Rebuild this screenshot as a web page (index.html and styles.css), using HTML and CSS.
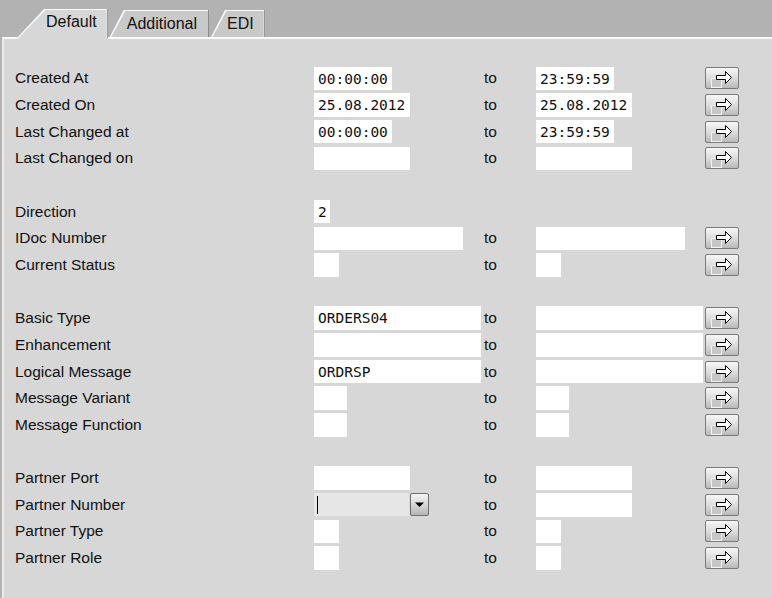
FILE: index.html
```html
<!DOCTYPE html>
<html lang="en">
<head>
  <meta charset="UTF-8">
  <title>IDoc Selection</title>
  <link rel="stylesheet" href="styles.css">
</head>
<body>
  <!-- Tab strip -->
  <div class="tabs">
    <div class="tab tab-active"><span>Default</span></div>
    <div class="tab tab-additional"><span>Additional</span></div>
    <div class="tab tab-edi"><span>EDI</span></div>
  </div>

  <div class="panel">
    <div class="form-grid">
      <!-- Dates and times -->
      <div class="label">Created At</div>
      <div class="field w-time">00:00:00</div>
      <div class="to">to</div>
      <div class="field w-time">23:59:59</div>
      <button class="sel-btn"><svg viewBox="0 0 32 20"><rect x="5.5" y="10.5" width="10" height="9" fill="#c6c6c6" stroke="#f2f2f2"/><path d="M10.5 7.5H19.5V3.5L25.5 9.5L19.5 15.5V11.5H10.5Z" fill="#fff" stroke="#000"/></svg></button>

      <div class="label">Created On</div>
      <div class="field w-date">25.08.2012</div>
      <div class="to">to</div>
      <div class="field w-date">25.08.2012</div>
      <button class="sel-btn"><svg viewBox="0 0 32 20"><rect x="5.5" y="10.5" width="10" height="9" fill="#c6c6c6" stroke="#f2f2f2"/><path d="M10.5 7.5H19.5V3.5L25.5 9.5L19.5 15.5V11.5H10.5Z" fill="#fff" stroke="#000"/></svg></button>

      <div class="label">Last Changed at</div>
      <div class="field w-time">00:00:00</div>
      <div class="to">to</div>
      <div class="field w-time">23:59:59</div>
      <button class="sel-btn"><svg viewBox="0 0 32 20"><rect x="5.5" y="10.5" width="10" height="9" fill="#c6c6c6" stroke="#f2f2f2"/><path d="M10.5 7.5H19.5V3.5L25.5 9.5L19.5 15.5V11.5H10.5Z" fill="#fff" stroke="#000"/></svg></button>

      <div class="label">Last Changed on</div>
      <div class="field w-date"></div>
      <div class="to">to</div>
      <div class="field w-date"></div>
      <button class="sel-btn"><svg viewBox="0 0 32 20"><rect x="5.5" y="10.5" width="10" height="9" fill="#c6c6c6" stroke="#f2f2f2"/><path d="M10.5 7.5H19.5V3.5L25.5 9.5L19.5 15.5V11.5H10.5Z" fill="#fff" stroke="#000"/></svg></button>

      <div class="gap-row"></div>

      <!-- IDoc -->
      <div class="label">Direction</div>
      <div class="field w-1">2</div>

      <div class="label">IDoc Number</div>
      <div class="field w-idoc"></div>
      <div class="to">to</div>
      <div class="field w-idoc"></div>
      <button class="sel-btn"><svg viewBox="0 0 32 20"><rect x="5.5" y="10.5" width="10" height="9" fill="#c6c6c6" stroke="#f2f2f2"/><path d="M10.5 7.5H19.5V3.5L25.5 9.5L19.5 15.5V11.5H10.5Z" fill="#fff" stroke="#000"/></svg></button>

      <div class="label">Current Status</div>
      <div class="field w-2"></div>
      <div class="to">to</div>
      <div class="field w-2"></div>
      <button class="sel-btn"><svg viewBox="0 0 32 20"><rect x="5.5" y="10.5" width="10" height="9" fill="#c6c6c6" stroke="#f2f2f2"/><path d="M10.5 7.5H19.5V3.5L25.5 9.5L19.5 15.5V11.5H10.5Z" fill="#fff" stroke="#000"/></svg></button>

      <div class="gap-row"></div>

      <!-- Message -->
      <div class="label">Basic Type</div>
      <div class="field w-long">ORDERS04</div>
      <div class="to">to</div>
      <div class="field w-long"></div>
      <button class="sel-btn"><svg viewBox="0 0 32 20"><rect x="5.5" y="10.5" width="10" height="9" fill="#c6c6c6" stroke="#f2f2f2"/><path d="M10.5 7.5H19.5V3.5L25.5 9.5L19.5 15.5V11.5H10.5Z" fill="#fff" stroke="#000"/></svg></button>

      <div class="label">Enhancement</div>
      <div class="field w-long"></div>
      <div class="to">to</div>
      <div class="field w-long"></div>
      <button class="sel-btn"><svg viewBox="0 0 32 20"><rect x="5.5" y="10.5" width="10" height="9" fill="#c6c6c6" stroke="#f2f2f2"/><path d="M10.5 7.5H19.5V3.5L25.5 9.5L19.5 15.5V11.5H10.5Z" fill="#fff" stroke="#000"/></svg></button>

      <div class="label">Logical Message</div>
      <div class="field w-long">ORDRSP</div>
      <div class="to">to</div>
      <div class="field w-long"></div>
      <button class="sel-btn"><svg viewBox="0 0 32 20"><rect x="5.5" y="10.5" width="10" height="9" fill="#c6c6c6" stroke="#f2f2f2"/><path d="M10.5 7.5H19.5V3.5L25.5 9.5L19.5 15.5V11.5H10.5Z" fill="#fff" stroke="#000"/></svg></button>

      <div class="label">Message Variant</div>
      <div class="field w-3"></div>
      <div class="to">to</div>
      <div class="field w-3"></div>
      <button class="sel-btn"><svg viewBox="0 0 32 20"><rect x="5.5" y="10.5" width="10" height="9" fill="#c6c6c6" stroke="#f2f2f2"/><path d="M10.5 7.5H19.5V3.5L25.5 9.5L19.5 15.5V11.5H10.5Z" fill="#fff" stroke="#000"/></svg></button>

      <div class="label">Message Function</div>
      <div class="field w-3"></div>
      <div class="to">to</div>
      <div class="field w-3"></div>
      <button class="sel-btn"><svg viewBox="0 0 32 20"><rect x="5.5" y="10.5" width="10" height="9" fill="#c6c6c6" stroke="#f2f2f2"/><path d="M10.5 7.5H19.5V3.5L25.5 9.5L19.5 15.5V11.5H10.5Z" fill="#fff" stroke="#000"/></svg></button>

      <div class="gap-row"></div>

      <!-- Partner -->
      <div class="label">Partner Port</div>
      <div class="field w-date"></div>
      <div class="to">to</div>
      <div class="field w-date"></div>
      <button class="sel-btn"><svg viewBox="0 0 32 20"><rect x="5.5" y="10.5" width="10" height="9" fill="#c6c6c6" stroke="#f2f2f2"/><path d="M10.5 7.5H19.5V3.5L25.5 9.5L19.5 15.5V11.5H10.5Z" fill="#fff" stroke="#000"/></svg></button>

      <div class="label">Partner Number</div>
      <div class="combo">
        <div class="combo-input"><span class="caret"></span></div>
        <div class="combo-btn"><svg viewBox="0 0 17 21"><path d="M4 8.5H13L8.5 13Z" fill="#000"/></svg></div>
      </div>
      <div class="to">to</div>
      <div class="field w-date"></div>
      <button class="sel-btn"><svg viewBox="0 0 32 20"><rect x="5.5" y="10.5" width="10" height="9" fill="#c6c6c6" stroke="#f2f2f2"/><path d="M10.5 7.5H19.5V3.5L25.5 9.5L19.5 15.5V11.5H10.5Z" fill="#fff" stroke="#000"/></svg></button>

      <div class="label">Partner Type</div>
      <div class="field w-2"></div>
      <div class="to">to</div>
      <div class="field w-2"></div>
      <button class="sel-btn"><svg viewBox="0 0 32 20"><rect x="5.5" y="10.5" width="10" height="9" fill="#c6c6c6" stroke="#f2f2f2"/><path d="M10.5 7.5H19.5V3.5L25.5 9.5L19.5 15.5V11.5H10.5Z" fill="#fff" stroke="#000"/></svg></button>

      <div class="label">Partner Role</div>
      <div class="field w-2"></div>
      <div class="to">to</div>
      <div class="field w-2"></div>
      <button class="sel-btn"><svg viewBox="0 0 32 20"><rect x="5.5" y="10.5" width="10" height="9" fill="#c6c6c6" stroke="#f2f2f2"/><path d="M10.5 7.5H19.5V3.5L25.5 9.5L19.5 15.5V11.5H10.5Z" fill="#fff" stroke="#000"/></svg></button>
    </div>
  </div>
</body>
</html>
```

FILE: styles.css
```css
body {
  margin: 0;
  height: 598px;
  overflow: hidden;
  display: flex;
  flex-direction: column;
  background-color: #b2b2b2;
  font-family: 'Liberation Sans', Arial, sans-serif;
  color: #111;
}

/* Tabs */
.tabs {
  display: flex;
  align-items: flex-end;
  height: 28px;
  padding: 9px 0 0 16px;
}

.tab {
  position: relative;
  height: 27px;
  font-size: 16px;
  line-height: 24px;
  margin-left: 2px;
}

.tab::before,
.tab::after {
  content: '';
  position: absolute;
}

.tab::before {
  top: 0;
  left: 0;
  right: 0;
  bottom: 0;
  background: linear-gradient(to left, #8c8c8c 1px, #fafafa 1px);
  clip-path: polygon(0 100%, var(--slant) 0, 100% 0, 100% 100%);
}

.tab::after {
  top: 1px;
  left: 1.5px;
  right: 1px;
  bottom: 0;
  background: #c9c9c9;
  clip-path: polygon(0 100%, var(--slant) 0, 100% 0, 100% 100%);
}

.tab span {
  position: relative;
  z-index: 1;
  display: block;
  padding-top: 2px;
}

.tab-active {
  --slant: 28px;
  z-index: 2;
  height: 30px;
  margin-left: 0;
  margin-bottom: -2px;
}

.tab-active::after {
  background: #d7d7d7;
}

.tab-active span {
  padding: 1px 11px 0 30px;
}

.tab-additional {
  --slant: 14px;
}

.tab-additional span {
  padding-left: 17px;
  padding-right: 12px;
}

.tab-edi {
  --slant: 14px;
}

.tab-edi span {
  padding-left: 16px;
  padding-right: 11px;
}

/* Panel */
.panel {
  flex: 1;
  margin-left: 2px;
  background-color: #d7d7d7;
  border-top: 2px solid #fbfbfb;
  border-left: 2px solid #ececec;
  padding: 26px 0 0 11px;
}

.form-grid {
  display: grid;
  grid-template-columns: 299px 170px 52px 169px 34px;
  grid-auto-rows: 26.67px;
  align-items: center;
  justify-items: start;
}

.label {
  grid-column: 1;
  font-size: 15.5px;
}

.to {
  font-size: 15.5px;
}

.gap-row {
  grid-column: 1 / -1;
}

.field {
  box-sizing: border-box;
  height: 23.5px;
  padding: 0 4px;
  background-color: #fff;
  font-family: 'DejaVu Sans Mono', monospace;
  font-size: 14.5px;
  line-height: 24px;
  white-space: nowrap;
  overflow: hidden;
}

.w-1 { width: 16px; }
.w-2 { width: 25px; }
.w-3 { width: 33px; }
.w-time { width: 78px; }
.w-date { width: 96px; }
.w-idoc { width: 149px; }
.w-long { width: 167px; }

/* Selection button */
.sel-btn {
  box-sizing: border-box;
  width: 34px;
  height: 22px;
  padding: 0;
  border: 1px solid #7a7a7a;
  border-radius: 2px;
  background: linear-gradient(#f7f7f7, #dadada 55%, #b9b9b9);
  display: block;
}

.sel-btn svg {
  display: block;
  width: 32px;
  height: 20px;
}

/* Dropdown field */
.combo {
  display: flex;
  height: 23px;
}

.combo-input {
  width: 95px;
  height: 23px;
  background-color: #e6e6e6;
  display: flex;
  align-items: center;
}

.caret {
  width: 1px;
  height: 18px;
  margin-left: 3px;
  background-color: #000;
}

.combo-btn {
  box-sizing: border-box;
  width: 19px;
  height: 23px;
  margin-left: 1px;
  border: 1px solid #6f6f6f;
  border-radius: 2px;
  background: linear-gradient(#f5f5f5, #d4d4d4 55%, #b5b5b5);
}

.combo-btn svg {
  display: block;
  width: 17px;
  height: 21px;
}
```
